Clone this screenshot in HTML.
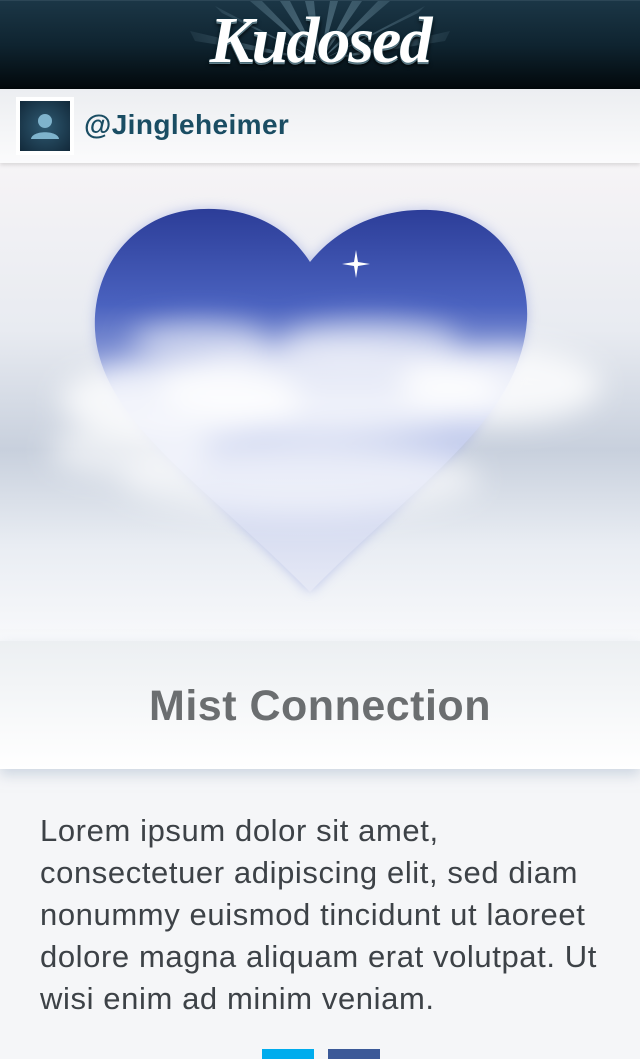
<!DOCTYPE html>
<html><head><meta charset="utf-8"><style>
*{margin:0;padding:0;box-sizing:border-box}
body{width:640px;height:1055px;overflow:hidden;background:#f5f6f8;font-family:"Liberation Sans",Arial,sans-serif;position:relative}
.hdr{position:absolute;left:0;top:0;width:640px;height:89px;background:linear-gradient(#1b3646,#0f2430 50%,#02080b);border-top:1px solid #2c4656}
.logo{position:absolute;left:0;width:640px;top:2px;text-align:center;font-family:"Liberation Serif",serif;font-style:italic;font-weight:bold;font-size:66px;color:#fff;letter-spacing:-2px;text-shadow:0 0 2px #0d3a4a,0 2px 0 #6a8590,0 3px 4px #000}
.user{position:absolute;top:89px;left:0;width:640px;height:74px;background:linear-gradient(#eceef1,#fbfbfc);box-shadow:0 2px 4px rgba(0,0,0,.12);z-index:2}
.av{position:absolute;left:16px;top:8px;width:58px;height:58px;background:#fff;padding:4px}
.av div{width:50px;height:50px;background:radial-gradient(#2f5a72,#12293a);position:relative;overflow:hidden}
.uname{position:absolute;left:84px;top:20px;font-size:28px;letter-spacing:.4px;font-weight:bold;color:#1a4d63}
.img{position:absolute;top:163px;left:0;width:640px;height:478px;background:linear-gradient(#f6f4f6 0%,#e8ebf1 35%,#c8d0dd 60%,#e9edf3 80%,#f8f9fb 100%);overflow:hidden}
.title{position:absolute;top:641px;left:0;width:640px;height:128px;background:linear-gradient(#eceff2,#fff);text-align:center;font-size:43px;letter-spacing:.5px;font-weight:bold;color:#6b6e70;line-height:130px;box-shadow:0 6px 12px rgba(170,185,205,.5)}
.body{position:absolute;left:40px;top:810px;width:600px;font-size:31px;letter-spacing:.6px;line-height:42px;color:#3d4247;white-space:nowrap}
.tw{position:absolute;left:262px;top:1049px;width:52px;height:10px;background:#00aced}
.fb{position:absolute;left:328px;top:1049px;width:52px;height:10px;background:#3b5998}
</style></head><body>
<div class="hdr">
<svg width="640" height="88" style="position:absolute;left:0;top:0"><defs><radialGradient id="rg" cx="320" cy="60" r="160" gradientUnits="userSpaceOnUse"><stop offset="0" stop-color="#6d8fa0" stop-opacity=".7"/><stop offset="1" stop-color="#6d8fa0" stop-opacity="0"/></radialGradient></defs>
<g fill="url(#rg)"><polygon points="320,60 250,0 262,0"/><polygon points="320,60 280,0 290,0"/><polygon points="320,60 305,0 314,0"/><polygon points="320,60 330,0 338,0"/><polygon points="320,60 352,0 362,0"/><polygon points="320,60 378,0 390,0"/><polygon points="320,60 190,30 195,40"/><polygon points="320,60 450,30 445,40"/><polygon points="320,60 215,5 222,12"/><polygon points="320,60 425,5 418,12"/></g></svg>
<div class="logo">Kudosed</div></div>
<div class="user"><div class="av"><div><svg width="50" height="50"><circle cx="25" cy="20" r="7" fill="#7fb3cc"/><path d="M11,38 C12,29 38,29 39,38 Z" fill="#7fb3cc"/></svg></div></div><div class="uname">@Jingleheimer</div></div>
<div class="img">
<svg width="640" height="478" viewBox="0 163 640 478">
<defs>
<linearGradient id="hg" x1="0" y1="0" x2="0" y2="1"><stop offset="0" stop-color="#2c3d98"/><stop offset=".25" stop-color="#4a62bf"/><stop offset=".5" stop-color="#b9c4ea"/><stop offset="1" stop-color="#e6e9f5"/></linearGradient>
<filter id="b" x="-50%" y="-50%" width="200%" height="200%"><feGaussianBlur stdDeviation="14"/></filter>
<filter id="b2"><feGaussianBlur stdDeviation="6"/></filter>
</defs>
<path d="M310,262 C280,215 230,205 190,210 C130,218 92,270 95,330 C100,420 200,480 310,592 C420,480 520,420 527,320 C530,260 490,212 430,210 C385,208 340,225 310,262 Z" fill="#9aa6e0" filter="url(#b2)" opacity=".6"/>
<path d="M310,262 C280,215 230,205 190,210 C130,218 92,270 95,330 C100,420 200,480 310,592 C420,480 520,420 527,320 C530,260 490,212 430,210 C385,208 340,225 310,262 Z" fill="url(#hg)"/>
<g fill="#fff" filter="url(#b)">
<ellipse cx="180" cy="400" rx="120" ry="40" opacity=".8"/>
<ellipse cx="330" cy="390" rx="170" ry="45" opacity=".75"/>
<ellipse cx="500" cy="385" rx="100" ry="38" opacity=".8"/>
<ellipse cx="300" cy="480" rx="180" ry="35" opacity=".6"/>
<ellipse cx="130" cy="450" rx="80" ry="28" opacity=".6"/>
<ellipse cx="200" cy="340" rx="70" ry="18" opacity=".6"/>
<ellipse cx="370" cy="340" rx="90" ry="20" opacity=".6"/>
</g>
<path d="M448,265 A22,22 0 1 1 428,308 A18,18 0 1 0 448,265 Z" fill="#f4f2e0"/>
<path d="M356,250 L358,262 L370,264 L358,266 L356,278 L354,266 L342,264 L354,262 Z" fill="#fff"/>
</svg></div>
<div class="title">Mist Connection</div>
<div class="body">Lorem ipsum dolor sit amet,<br>consectetuer adipiscing elit, sed diam<br>nonummy euismod tincidunt ut laoreet<br>dolore magna aliquam erat volutpat. Ut<br>wisi enim ad minim veniam.</div>
<div class="tw"></div><div class="fb"></div>
</body></html>
